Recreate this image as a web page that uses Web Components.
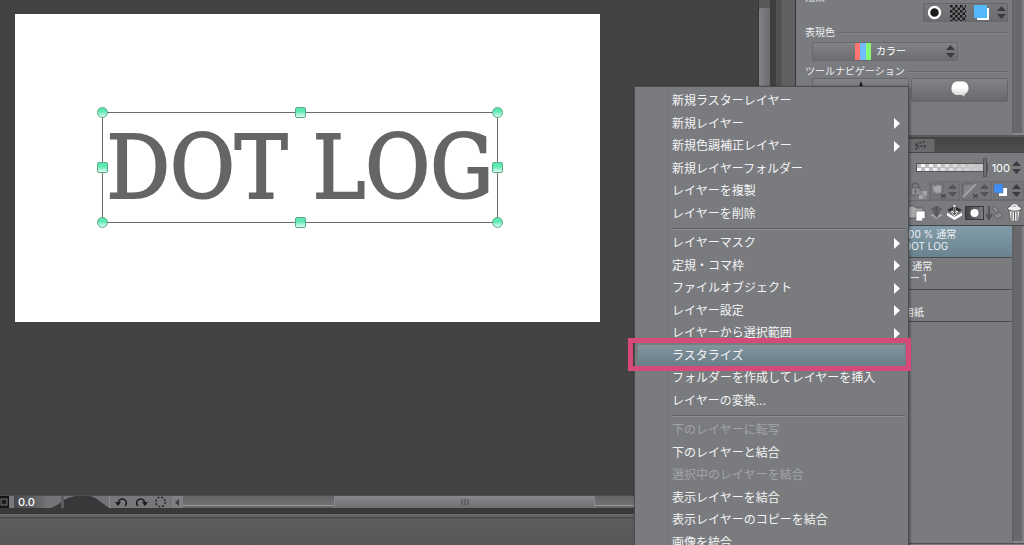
<!DOCTYPE html>
<html lang="ja">
<head>
<meta charset="utf-8">
<meta name="viewport" content="width=device-width, initial-scale=1">
<title>DOT LOG</title>
<style>
  html, body { margin: 0; height: 100%; }
  body {
    overflow: hidden;
    background: #434343;
    color: #f0f0f0;
    font: 10px/12px Inter, "Noto Sans CJK JP", sans-serif;
    --panel: #7a7b7f;
    --edge: #4b4c4e;
  }
</style>
</head>
<body>
<paint-app>
  <canvas-view slot="canvas"><transform-box>DOT LOG</transform-box></canvas-view>
  <view-bar slot="bar"></view-bar>
  <property-panel slot="side"></property-panel>
  <layer-panel slot="side">
    <layer-row selected indent="1"><span slot="mode">100 % 通常</span>DOT LOG</layer-row>
    <layer-row><span slot="mode">100 % 通常</span>レイヤー 1</layer-row>
    <layer-row indent="1">用紙</layer-row>
  </layer-panel>
  <context-menu slot="overlay">
    <menu-group>
      <menu-entry>新規ラスターレイヤー</menu-entry>
      <menu-entry submenu>新規レイヤー</menu-entry>
      <menu-entry submenu>新規色調補正レイヤー</menu-entry>
      <menu-entry>新規レイヤーフォルダー</menu-entry>
      <menu-entry>レイヤーを複製</menu-entry>
      <menu-entry>レイヤーを削除</menu-entry>
    </menu-group>
    <menu-group class="long">
      <menu-entry submenu>レイヤーマスク</menu-entry>
      <menu-entry submenu>定規・コマ枠</menu-entry>
      <menu-entry submenu>ファイルオブジェクト</menu-entry>
      <menu-entry submenu>レイヤー設定</menu-entry>
      <menu-entry submenu>レイヤーから選択範囲</menu-entry>
      <menu-entry active>ラスタライズ</menu-entry>
      <menu-entry>フォルダーを作成してレイヤーを挿入</menu-entry>
      <menu-entry>レイヤーの変換...</menu-entry>
    </menu-group>
    <menu-group>
      <menu-entry disabled>下のレイヤーに転写</menu-entry>
      <menu-entry>下のレイヤーと結合</menu-entry>
      <menu-entry disabled>選択中のレイヤーを結合</menu-entry>
      <menu-entry>表示レイヤーを結合</menu-entry>
      <menu-entry>表示レイヤーのコピーを結合</menu-entry>
      <menu-entry>画像を統合</menu-entry>
    </menu-group>
  </context-menu>
</paint-app>

<script>
const define = (name, html, setup) => {
  const tpl = document.createElement('template');
  tpl.innerHTML = html;
  customElements.define(name, class extends HTMLElement {
    constructor() {
      super();
      this.attachShadow({ mode: 'open' }).append(tpl.content.cloneNode(true));
      if (setup) setup(this, this.shadowRoot);
    }
  });
};

/* Pair of up/down triangles shared by every value control. */
define('step-arrows', `
<style>
  :host { display: block; width: 9px; height: 13px; flex: none; color: #3b3c3e; }
  svg { display: block; }
</style>
<svg width="9" height="13" viewBox="0 0 9 13" fill="currentColor"><path d="M4.5 0 9 5H0zM4.5 13 0 8h9z"/></svg>`);

define('paint-app', `
<style>
  :host { display: grid; grid-template-columns: minmax(0, 1fr) 248px; height: 100vh; position: relative; overflow: hidden; }
  .work { display: flex; flex-direction: column; min-width: 0; }
  .stage { flex: 1; display: flex; min-height: 0; }
  .stage ::slotted(*) { flex: 1; }
  .vscroll { width: 12px; margin-right: 6px; background: #58595b; border-left: 1px solid #383838; box-shadow: 6px 0 #3e3e3e; padding-top: 8px; box-sizing: border-box; display: flex; }
  .vscroll i { flex: 1; border-radius: 2px; background: linear-gradient(90deg, #828386, #6a6b6e); }
  .side { display: flex; flex-direction: column; background: linear-gradient(90deg, #505050 5px, #606060 6px, #616161 19px, #343536 19px 20px, #7a7b7f 20px); padding-left: 20px; }
  .foot { height: 31px; background: linear-gradient(#6b6b6b 0 1px, #646464 1px 3px, #4a4a4a 3px 4px, #5e5e5e 5px, #575757); }
</style>
<div class="work">
  <div class="stage"><slot name="canvas"></slot><div class="vscroll"><i></i></div></div>
  <slot name="bar"></slot>
  <div class="foot"></div>
</div>
<aside class="side"><slot name="side"></slot></aside>
<slot name="overlay"></slot>`);

define('canvas-view', `
<style>
  :host { display: block; min-width: 0; background: #434343; padding: 14px 158px 0 15px; box-sizing: border-box; }
  .paper { position: relative; aspect-ratio: 585 / 308; background: #fff; }
</style>
<div class="paper"><slot></slot></div>`);

/* Text object on the free canvas, with its eight transform handles. */
define('transform-box', `
<style>
  :host {
    position: absolute; left: 87px; top: 98px; width: 394px; height: 109px; border: 1px solid #6c6c6c;
    color: #656565; font: 88px/109px "DejaVu Serif Condensed", "DejaVu Serif", serif; text-align: center; white-space: nowrap;
    -webkit-text-stroke: 2px #656565;
  }
  .handles { position: absolute; inset: -6px; display: grid; grid-template-columns: repeat(3, auto); justify-content: space-between; align-content: space-between; }
  i { width: 9px; height: 9px; border: 1px solid #58a988; border-radius: 2px; background: linear-gradient(#5ee9b2 40%, #e4fff4); }
  i.c { border-radius: 50%; }
  i.n { visibility: hidden; }
</style>
<slot></slot>
<div class="handles"><i class="c"></i><i></i><i class="c"></i><i></i><i class="n"></i><i></i><i class="c"></i><i></i><i class="c"></i></div>`);

define('view-bar', `
<style>
  :host { display: flex; height: 12px; background: #6d6e70; border-top: 1px solid #4f4f50; border-bottom: 6px solid #393939; }
  button { border: 0; padding: 0; background: #77787b; display: flex; align-items: center; justify-content: center; }
  svg { display: block; }
  .fit { width: 9px; background: #151515; }
  .gap { width: 5px; background: #77787b; }
  input { width: 31px; box-sizing: border-box; border: 0; padding: 0 0 0 4px; margin: 0; background: linear-gradient(90deg, #47484a, #6d6e71); color: #fff; font: 500 11px/12px Inter, sans-serif; }
  .bars { display: block; background: #737477; flex: none; }
  .tool { width: 19px; }
  .tool.first { width: 22px; }
  .left { width: 12px; background: #7e7f82; margin-left: 1px; }
  .track { flex: 1; display: grid; grid-template-columns: 151fr 262fr 181fr; background: linear-gradient(#646567, #707173 9px, #979899 9px 10px, #68696b 10px); }
  .thumb { grid-column: 2; background: linear-gradient(#88898b, #6d6e71); border: 1px solid #8b8c8e; border-width: 0 1px; border-radius: 2px; display: flex; justify-content: center; align-items: center; }
</style>
<button class="fit" aria-label="全体表示"><svg width="9" height="12"><rect x="1" y="3" width="6" height="6" fill="#1e1e1e" stroke="#77787a"/></svg></button>
<div class="gap"></div>
<input aria-label="回転角度" value="0.0">
<svg class="bars" width="65" height="12"><path d="M6 12Q13 9 16 6V12z" fill="#3a3b3d"/><path d="M17.500 0v12" stroke="#5c5d60" stroke-width="3"/><path d="M19 12V4C29-2 45-2 52 3L64 12z" fill="#37383a"/><path d="M64.500 0v12" stroke="#8a8b8d"/></svg>
<button class="tool first" aria-label="左回転"><svg width="13" height="12" viewBox="0 0 13 12" fill="none"><path d="M3.500 6a4 4 0 1 1 6.500 4" stroke="#1d1d1e" stroke-width="1.600"/><path d="M0 6h6L3 10z" fill="#1d1d1e"/></svg></button>
<button class="tool" aria-label="右回転"><svg width="13" height="12" viewBox="0 0 13 12" fill="none"><path d="M9.500 6A4 4 0 1 0 3 10" stroke="#1d1d1e" stroke-width="1.600"/><path d="M7 6h6l-3 4z" fill="#1d1d1e"/></svg></button>
<button class="tool" aria-label="回転をリセット"><svg width="13" height="12" viewBox="0 0 13 12"><circle cx="6.500" cy="6" r="4.800" fill="none" stroke="#29292a" stroke-width="1.500" stroke-dasharray="2 1.770"/></svg></button>
<button class="left" aria-label="左へスクロール"><svg width="5" height="7"><path d="M4 0v7L0 3.500z" fill="#3c3c3e"/></svg></button>
<div class="track"><div class="thumb"><svg width="8" height="6"><path d="M1 0v6M4 0v6M7 0v6" stroke="#47484a"/></svg></div></div>`);

define('rule-heading', `
<style>
  :host { display: flex; align-items: center; height: 12px; gap: 3px; margin: 0 4px 0 5px; white-space: nowrap; }
  :host::before { content: ""; width: 1px; }
  :host::after { content: ""; flex: 1; height: 1px; background: #67686b; box-shadow: 0 1px #838487; }
</style><slot></slot>`);

define('property-panel', `
<style>
  :host { display: block; flex: none; height: 135px; overflow: hidden; }
  .wrap { display: flex; height: 100%; }
  .body { flex: 1; min-width: 0; background: var(--panel); }
  .strip { width: 12px; box-sizing: border-box; background: #69696b; border-left: 1px solid #616264; border-right: 2px solid #808184; border-bottom: 2px solid #88898b; }
  .head { display: flex; justify-content: space-between; padding: 0 4px 0 8px; height: 26px; }
  .head span { margin-top: -9px; line-height: 12px; padding-left: 1px; }
  .set { height: 19px; margin-top: 3px; padding: 0 1px 0 3px; display: flex; align-items: center; gap: 8px; background: linear-gradient(#77787b, #6b6c6f); border: 1px solid #66676a; box-sizing: border-box; }
  button { border: 0; padding: 0; background: none; display: block; }
  svg { display: block; }
  .combo { position: relative; display: flex; align-items: center; width: 146px; height: 19px; margin: 4px 0 4px 16px; box-sizing: border-box; border: 1px solid #68696c; border-radius: 2px; background: linear-gradient(#828386, #6c6d70); }
  .swatch { width: 16px; height: 17px; margin-left: 42px; flex: none; background: linear-gradient(90deg, #ff7572 33%, #72bdff 33% 66%, #86fb78 66%); }
  select { flex: 1; appearance: none; border: 0; padding: 0 0 0 5px; margin: 0; background: none; color: #fff; font: 10px/17px Inter, "Noto Sans CJK JP", sans-serif; }
  step-arrows { margin-right: 2px; }
  .set step-arrows { margin: 0; }
  .pair { display: grid; grid-template-columns: 1fr 1fr; gap: 2px; margin: 1px 4px 0 16px; }
  .pair button { height: 24px; box-sizing: border-box; border: 1px solid #66676a; border-radius: 2px; background: linear-gradient(#828386, #68696c); display: flex; justify-content: center; }
</style>
<div class="wrap">
<div class="body">
  <div class="head"><span>効果</span>
    <div class="set">
      <button aria-label="境界効果"><svg width="15" height="15"><circle cx="7.500" cy="7.500" r="5.500" fill="#1c1c1d" stroke="#fff" stroke-width="2.400"/></svg></button>
      <button aria-label="トーン"><svg width="16" height="16"><defs><pattern id="t" width="5" height="5" patternUnits="userSpaceOnUse"><path d="M0 0h2.500v2.500H0zM2.500 2.500H5V5H2.500z" fill="#1e1e1f"/></pattern></defs><rect width="16" height="16" fill="url(#t)"/></svg></button>
      <button aria-label="レイヤーカラー"><svg width="15" height="15"><path d="M3 3h12v12H3z" fill="#fff"/><path d="M0 0h13v13H0z" fill="#52b8fb"/></svg></button>
      <step-arrows></step-arrows>
    </div>
  </div>
  <rule-heading><label for="mode">表現色</label></rule-heading>
  <div class="combo"><span class="swatch"></span><select id="mode"><option>カラー</option></select><step-arrows></step-arrows></div>
  <rule-heading>ツールナビゲーション</rule-heading>
  <div class="pair">
    <button aria-label="ペン"><svg width="10" height="18"><path d="M5 2 8 10 6 18H4L2 10z" fill="#1c1c1d"/></svg></button>
    <button aria-label="フキダシ"><svg width="20" height="20" viewBox="0 0 20 20"><defs><linearGradient id="b" x2="0" y2="1"><stop offset=".4" stop-color="#fff"/><stop offset="1" stop-color="#c9c9c9"/></linearGradient></defs><path d="M6 2h8q5 2 5 7.500 0 4-4 6v3l-3-2H6Q1 14.500 1 9.500 1 4 6 2z" fill="url(#b)" stroke="#5d5e60" stroke-width=".7"/></svg></button>
  </div>
</div>
<div class="strip"></div>
</div>`);

define('layer-panel', `
<style>
  :host { flex: 1; display: flex; flex-direction: column; min-height: 0; background: var(--panel); }
  .tabs { height: 18px; box-sizing: border-box; display: flex; border-top: 2px solid #5a5b5d; background: linear-gradient(#434343, #4f4f4f); border-bottom: 1px solid #454648; }
  .tab { width: 139px; margin-top: 2px; border: 0; border-right: 1px solid #57585a; background: linear-gradient(90deg, #7a7b7f 20%, #68696b); padding: 0 5px 0 0; display: flex; justify-content: flex-end; align-items: center; }
  svg { display: block; }
  button { border: 0; padding: 0; margin: 0; background: none; }
  .opacity { height: 25px; padding: 2px 3px 0 0; display: flex; align-items: center; justify-content: flex-end; }
  input[type=range] { appearance: none; width: 72px; height: 19px; margin: 0; background: none; }
  input[type=range]::-webkit-slider-runnable-track {
    height: 9px; border: 1px solid #55565a; box-sizing: border-box;
    background: linear-gradient(90deg, #fff0, #c6c6c6 90%), conic-gradient(#fff 25%, #bcbcbc 0 50%, #fff 0 75%, #bcbcbc 0) 0 0 / 8px 7px;
  }
  input[type=range]::-webkit-slider-thumb { appearance: none; width: 4px; height: 19px; margin-top: -6px; background: #6e6f72; border: 1px solid #525356; box-sizing: border-box; }
  input[type=text] { width: 20px; margin: 0 2px; padding: 0; border: 0; background: none; color: #fff; text-align: right; font: 11px/14px Inter, sans-serif; }
  .row { display: flex; justify-content: flex-end; align-items: center; }
  .locks { height: 20px; gap: 1px; }
  .cell { height: 19px; box-sizing: border-box; display: flex; align-items: center; justify-content: flex-end; padding: 0 2px; gap: 1px; border: 1px solid #6c6d70; background: #757679; }
  .dim { width: 31px; } .dim step-arrows { color: #535457; }
  .color { width: 31px; padding-left: 0; gap: 4px; }
  .tools { height: 26px; gap: 2px; padding-right: 1px; border-top: 1px solid #6a6b6e; border-bottom: 1px solid #434446; box-sizing: border-box; }
  .main { flex: 1; display: flex; min-height: 0; border-bottom: 1px solid #505153; margin-bottom: 1px; }
  .list { flex: 1; }
  .strip { width: 12px; box-sizing: border-box; background: #69696b; border-left: 2px solid #616264; border-right: 2px solid #808184; border-bottom: 2px solid #88898b; }
</style>
<div class="tabs"><button class="tab" aria-label="レイヤー"><svg width="15" height="11"><path d="M2 4 12 1M2 4v7M3 6h9" stroke="#3e3f41" stroke-width="2" stroke-dasharray="2 1.500" fill="none"/><path d="M3 8h10" stroke="#4e4f51" stroke-width="1" stroke-dasharray="3 2"/></svg></button></div>
<div class="opacity"><input type="range" aria-label="不透明度" value="100"><input type="text" aria-label="不透明度の値" value="100"><step-arrows></step-arrows></div>
<div class="row locks">
  <button aria-label="透明ピクセルをロック"><svg width="18" height="19"><path d="M2.500 8V5a3 3 0 0 1 6 0v3" fill="none" stroke="#606164" stroke-width="1.500"/><path d="M1 7h9v7H1z" fill="#8e8f92" stroke="#626366"/><path d="M5.500 9v3" stroke="#555659" stroke-width="1.500"/><path d="M9 14h4v4H9zM13 10h4v4h-4z" fill="#a4a5a7"/><path d="M9 10h4v4H9zM13 14h4v4h-4z" fill="#88898c"/></svg></button>
  <div class="cell dim"><button aria-label="マスク"><svg width="17" height="17"><path d="M1 2h12v11H1z" fill="#7f8083" stroke="#67686b"/><path d="M3 4l3 1 1-2 4 1v6l-4 1-3-2z" fill="#a6a7a9"/><path d="m11 12 5 4m0-4-5 4" stroke="#48494c" stroke-width="1.500"/></svg></button><step-arrows></step-arrows></div>
  <div class="cell dim"><button aria-label="定規"><svg width="17" height="17"><path d="M1 15V2h13z" fill="#85868a" stroke="#606164"/><path d="M1 15 14 2" stroke="#a2a3a5" stroke-width="2"/><path d="m11 12 5 4m0-4-5 4" stroke="#48494c" stroke-width="1.500"/></svg></button><step-arrows></step-arrows></div>
  <div class="cell color"><button aria-label="レイヤーカラー"><svg width="14" height="13"><path d="M5 4h8v8H5z" fill="#fff"/><path d="M0 0h9v9H0z" fill="#3d8ef5" stroke="#6a6b6e" stroke-width=".5"/></svg></button><step-arrows></step-arrows></div>
</div>
<div class="row tools">
  <button aria-label="新規フォルダー"><svg width="20" height="20"><path d="M1 3h6l2 2h7v10H1z" fill="#a9aaac" stroke="#606164"/><path d="M9 8h9v7l-3 3H9z" fill="#fff" stroke="#56575a" stroke-width=".6"/><path d="M15 18v-3h3z" fill="#8d8e90"/></svg></button>
  <button aria-label="下のレイヤーに転写"><svg width="15" height="18"><path d="M1 5l6.500-3L14 5 7.500 9z" fill="#606164"/><path d="M1 11l6.500 4 6.500-4-6.500-3z" fill="#a0a1a3"/><path d="M7.500 2v9m-3-3 3 4 3-4" stroke="#56575a" stroke-width="2" fill="none"/></svg></button>
  <button aria-label="下のレイヤーと結合"><svg width="17" height="18"><path d="M1 6l7.500-4L16 6l-7.500 4z" fill="#303133"/><path d="M1 8.500 8.500 13 16 8.500v3L8.500 16 1 11.500z" fill="#fff"/><path d="M8.500 1v9m-3-3 3 4 3-4" stroke="#fff" stroke-width="1.800" fill="none"/><path d="M8.500 3v7m-2-2 2 3 2-3" stroke="#303133" stroke-width=".8" fill="none"/></svg></button>
  <button aria-label="レイヤーマスクを作成"><svg width="19" height="14"><defs><linearGradient id="m"><stop stop-color="#3e3f41"/><stop offset="1" stop-color="#7d7e81"/></linearGradient></defs><rect x=".5" y=".5" width="18" height="13" fill="url(#m)" stroke="#38393b"/><circle cx="9.500" cy="7" r="4" fill="#fff"/></svg></button>
  <button aria-label="マスクを適用"><svg width="18" height="18"><path d="M3 2v12m-3-4 3 5 3-5" stroke="#525356" stroke-width="2" fill="none"/><path d="M6 4 9 2l4 5-3 2zM8 11l6-3 3 4-6 3z" fill="#8b8c8f" stroke="#626366"/></svg></button>
  <button aria-label="レイヤーを削除"><svg width="17" height="20"><path d="M3 7l1.500 11h8L14 7z" fill="#efefef" stroke="#555" stroke-width=".8"/><path d="M6 9v8M8.500 9v8M11 9v8" stroke="#58595b"/><ellipse cx="8.500" cy="5.500" rx="7" ry="2.700" fill="#eee" stroke="#444"/><path d="M5 4q3.500-4.500 7 0" fill="none" stroke="#f4f4f4" stroke-width="1.500"/></svg></button>
</div>
<div class="main"><div class="list"><slot></slot></div><div class="strip"></div></div>`);

define('layer-row', `
<style>
  :host { display: flex; flex-direction: column; justify-content: center; height: 32px; box-sizing: border-box; padding: 0 0 3px 84px; border-bottom: 1px solid #48494b; white-space: nowrap; line-height: 12px; }
  :host([indent]) { padding-left: 108px; }
  :host(:last-child) { justify-content: flex-end; }
  :host([selected]) { background: linear-gradient(#819baa, #6a838f); }
</style>
<slot name="mode"></slot><span><slot></slot></span>`);

define('context-menu', `
<style>
  :host { position: absolute; right: 115px; top: 86px; width: 275px; box-sizing: border-box; padding: 3px 3px 0; border: 1px solid var(--edge); background: linear-gradient(90deg, var(--panel) 33px, #727377 33px 34px, var(--panel) 34px); box-shadow: 1px 1px 3px #0006; }
</style>
<div role="menu"><slot></slot></div>`);

/* Rows of a group share its height equally. */
define('menu-group', `
<style>
  :host { display: grid; grid-auto-rows: 1fr; height: 135px; }
  :host(.long) { height: 180px; }
  :host(:not(:first-child)) { margin-top: 7px; position: relative; }
  :host(:not(:first-child))::before { content: ""; position: absolute; left: 34px; right: 0; top: -4px; height: 1px; background: #606164; box-shadow: 0 1px #8d8e91; }
</style><slot></slot>`);

define('menu-entry', `
<style>
  :host { display: block; position: relative; }
  button { width: 100%; height: 100%; box-sizing: border-box; border: 0; margin: 0; padding: 0 5px 0 34px; display: flex; align-items: center; justify-content: space-between; background: none; color: #f4f4f4; font: 12px/18px Inter, "Noto Sans CJK JP", sans-serif; text-align: left; white-space: nowrap; }
  button:disabled { color: #a2a3a6; }
  svg, .mark { display: none; }
  :host([submenu]) svg { display: block; }
  :host([active]) { z-index: 1; }
  :host([active]) button { background: linear-gradient(#82949c, #687d88); }
  :host([active]) .mark { display: block; position: absolute; inset: -7px -6px -4px -10px; border: 5px solid #d64a79; pointer-events: none; }
</style>
<button role="menuitem"><span><slot></slot></span><svg width="6" height="11"><path d="M0 0 6 5.500 0 11z" fill="#fff"/></svg></button>
<div class="mark"></div>`, (host, root) => {
  root.querySelector('button').disabled = host.hasAttribute('disabled');
});
</script>
</body>
</html>
